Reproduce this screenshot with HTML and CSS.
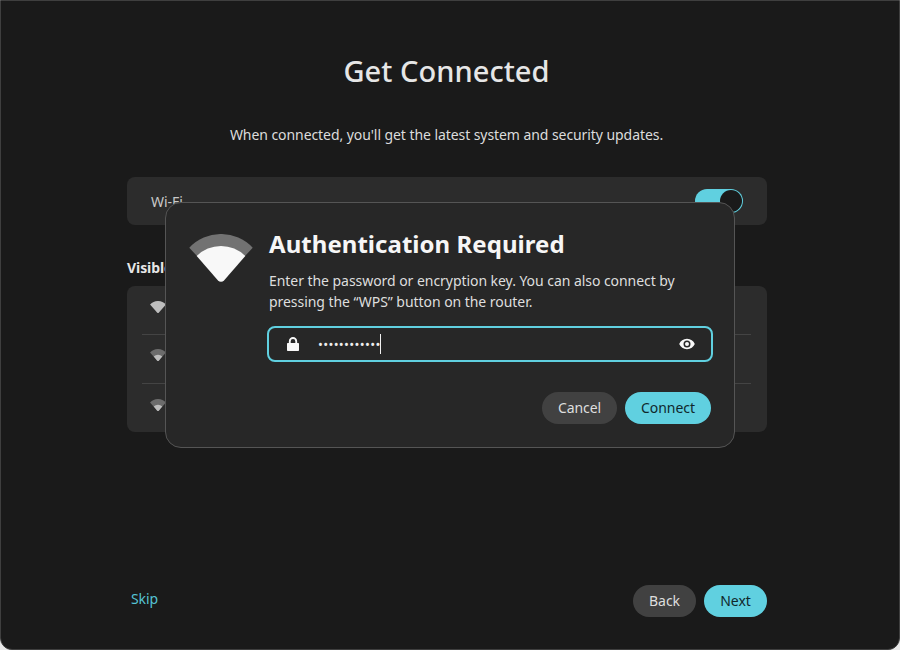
FILE: index.html
```html
<!DOCTYPE html>
<html lang="en">
<head>
<meta charset="utf-8">
<title>Get Connected</title>
<link rel="stylesheet" href="styles.css">
</head>
<body>
<div class="window">
  <main class="page">
    <h1 class="title">Get Connected</h1>
    <p class="subtitle">When connected, you'll get the latest system and security updates.</p>
    <section class="card wifi-card">
      <span class="wifi-label">Wi-Fi</span>
      <span class="toggle"><span class="knob"></span></span>
    </section>
    <h2 class="section-title">Visible Networks</h2>
    <section class="card network-list">
      <div class="network">
        <svg class="net-icon" viewBox="0 0 64 48"><path class="full" d="M.3 13.7A43.5 43.5 0 0 1 63.7 13.7L35 46.5a4 4 0 0 1-6 0Z"/></svg>
      </div>
      <div class="network">
        <svg class="net-icon" viewBox="0 0 64 48"><path class="dim" d="M.3 13.7A43.5 43.5 0 0 1 63.7 13.7L35 46.5a4 4 0 0 1-6 0Z"/><path class="full" d="M15 30A24 24 0 0 1 49 30L35 46.5a4 4 0 0 1-6 0Z"/></svg>
      </div>
      <div class="network">
        <svg class="net-icon" viewBox="0 0 64 48"><path class="dim" d="M.3 13.7A43.5 43.5 0 0 1 63.7 13.7L35 46.5a4 4 0 0 1-6 0Z"/><path class="full" d="M15 30A24 24 0 0 1 49 30L35 46.5a4 4 0 0 1-6 0Z"/></svg>
      </div>
    </section>
    <footer class="footer">
      <a class="skip">Skip</a>
      <div class="actions">
        <button class="btn btn-plain">Back</button>
        <button class="btn btn-accent">Next</button>
      </div>
    </footer>
  </main>

  <div class="dialog">
    <svg class="dialog-icon" viewBox="0 0 64 48">
      <path class="dialog-icon-dim" d="M.3 13.7A43.5 43.5 0 0 1 63.7 13.7L56 22H8Z"/>
      <path class="dialog-icon-full" d="M7.7 22A34.3 34.3 0 0 1 56.3 22L35 46.5a4 4 0 0 1-6 0Z"/>
    </svg>
    <div class="dialog-body">
      <h2 class="dialog-title">Authentication Required</h2>
      <p class="dialog-text">Enter the password or encryption key. You can also connect by pressing the “WPS” button on the router.</p>
      <div class="field">
        <svg class="lock" viewBox="0 0 13 15"><path fill-rule="evenodd" d="M.8 6.500H2V4.500a4.500 4.500 0 0 1 9 0V6.500h1.200a.8.8 0 0 1 .8.8v6.900a.8.8 0 0 1-.8.8H.8a.8.8 0 0 1-.8-.8V7.300a.8.8 0 0 1 .8-.8ZM4 6.500h5V4.500a2.500 2.500 0 0 0-5 0Z"/></svg>
        <span class="dots">••••••••••••</span><span class="caret"></span>
        <svg class="eye" viewBox="0 0 16 12"><path fill-rule="evenodd" d="M8 .8C4.400.8 1.500 3 .2 6c1.300 3 4.200 5.200 7.800 5.200S14.500 9 15.800 6C14.500 3 11.600.8 8 .8ZM8 9.500A3.500 3.500 0 1 1 8 2.500a3.500 3.500 0 0 1 0 7ZM8 4a2 2 0 1 0 0 4 2 2 0 0 0 0-4Z"/></svg>
      </div>
      <div class="dialog-actions">
        <button class="btn btn-plain btn-cancel">Cancel</button>
        <button class="btn btn-accent btn-connect">Connect</button>
      </div>
    </div>
  </div>
</div>
</body>
</html>
```
FILE: styles.css
```css
* { box-sizing: border-box; }
html, body { margin: 0; padding: 0; background: #e8e8e8; }
body { width: 900px; height: 650px; font-family: "Noto Sans", sans-serif; overflow: hidden; }
.window {
  position: relative;
  width: 900px;
  height: 650px;
  background: #1a1a1a;
  border: 1px solid #3f3f3f;
  border-radius: 0 0 12px 12px;
  overflow: hidden;
}
.window::before,
.window::after {
  content: "";
  position: absolute;
  top: -1px;
  width: 8px;
  height: 8px;
  background: #1a1a1a;
}
.window::before { left: -1px; }
.window::after { right: -1px; }
.page {
  display: flex;
  flex-direction: column;
  height: 100%;
  padding: 0 132px 32px 126px;
  color: #e6e6e6;
}
.title {
  margin: 52px 0 0;
  height: 36px;
  padding-right: 1px;
  line-height: 36px;
  font-size: 29px;
  font-weight: 500;
  text-align: center;
  letter-spacing: .05px;
}
.subtitle {
  margin: 36px 0 0;
  height: 20px;
  padding-right: 1px;
  line-height: 20px;
  font-size: 14px;
  letter-spacing: -.07px;
  text-align: center;
  color: #dcdcdc;
}
.card { background: #2c2c2c; border-radius: 8px; }
.wifi-card {
  display: flex;
  align-items: center;
  justify-content: space-between;
  height: 48px;
  margin-top: 32px;
  padding: 0 24px;
}
.wifi-label { font-size: 14px; letter-spacing: -.07px; color: #c8c8c8; }
.toggle {
  display: flex;
  justify-content: flex-end;
  width: 48px;
  height: 24px;
  padding: 1px;
  border-radius: 12px;
  background: #60d0e0;
}
.knob { width: 22px; height: 22px; border-radius: 50%; background: #1a1a1a; }
.section-title {
  margin: 33px 0 0;
  height: 20px;
  line-height: 20px;
  font-size: 14px;
  font-weight: 700;
  color: #e6e6e6;
  letter-spacing: -.07px;
}
.network-list { margin-top: 8px; height: 146px; padding: 0 16px 0 15px; }
.network {
  display: flex;
  align-items: flex-start;
  height: 49px;
  border-bottom: 1px solid #444;
  padding: 14px 0 0 8px;
}
.network:first-child, .network:last-child { padding-top: 15px; }
.network:last-child { border-bottom: 0; }
.net-icon { width: 16px; height: 12px; }
.net-icon .full { fill: #bdbdbd; }
.net-icon .dim { fill: #6c6c6c; }
.footer {
  display: flex;
  align-items: center;
  justify-content: space-between;
  margin-top: auto;
  padding-left: 4px;
}
.skip { font-size: 14px; letter-spacing: -.07px; color: #55c3d3; margin-top: -6px; }
.actions { display: flex; gap: 8px; }
.btn {
  width: 63px;
  height: 32px;
  border: 0;
  border-radius: 16px;
  padding: 0 0 2px;
  font-family: inherit;
  font-size: 14px;
  letter-spacing: -.07px;
}
.btn-plain { background: #414141; color: #dedede; }
.btn-accent { background: #60d0e0; color: #10282c; }

.dialog {
  position: absolute;
  left: 164px;
  top: 201px;
  width: 570px;
  height: 246px;
  display: flex;
  gap: 16px;
  padding: 31px 23px 0;
  background: #272727;
  border: 1px solid #555;
  border-radius: 16px;
}
.dialog-icon { flex: none; width: 64px; height: 48px; }
.dialog-icon-dim { fill: #727272; }
.dialog-icon-full { fill: #f8f8f8; }
.dialog-body { flex: 1; min-width: 0; }
.dialog-title {
  margin: -7px 0 0;
  height: 34px;
  line-height: 34px;
  font-size: 24px;
  font-weight: 700;
  letter-spacing: .04px;
  color: #f6f6f6;
}
.dialog-text {
  margin: 9px 0 0;
  line-height: 21px;
  font-size: 14px;
  letter-spacing: -.05px;
  color: #dedede;
}
.field {
  display: flex;
  align-items: center;
  width: 446px;
  height: 36px;
  margin: 14px 0 0 -2px;
  padding: 0 16px 0 18px;
  border: 2px solid #60d0e0;
  border-radius: 8px;
}
.lock { flex: none; width: 12px; height: 14px; margin-top: -1px; fill: #f8f8f8; }
.dots { margin-left: 19px; font-size: 13px; letter-spacing: .33px; color: #eee; line-height: 1; }
.caret { width: 1px; height: 20px; margin-left: -1px; background: #f0f0f0; }
.eye { flex: none; width: 16px; height: 12px; margin-left: auto; fill: #f8f8f8; }
.dialog-actions { display: flex; justify-content: flex-end; gap: 8px; margin-top: 30px; }
.btn-cancel { width: 75px; }
.btn-connect { width: 86px; }
```
